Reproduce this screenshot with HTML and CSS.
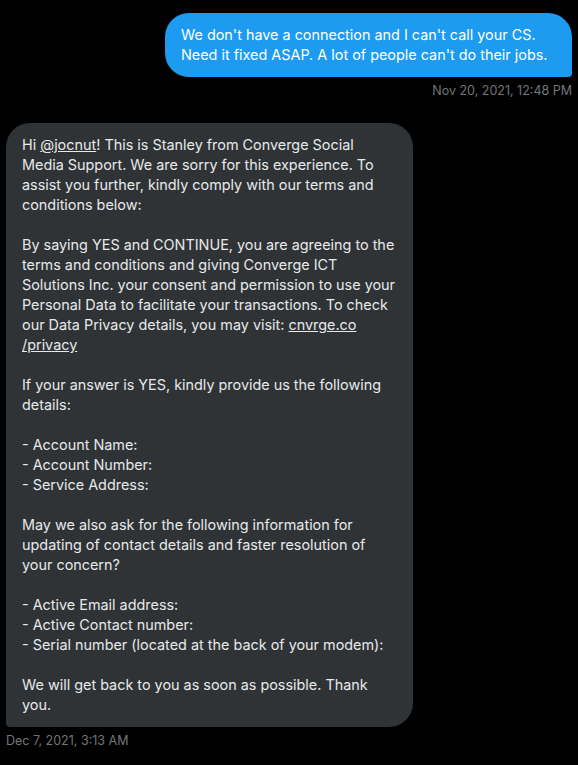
FILE: index.html
```html
<!DOCTYPE html>
<html lang="en">
<head>
    <meta charset="UTF-8">
    <meta name="viewport" content="width=device-width, initial-scale=1.0">
    <title>Messages</title>
    <link rel="stylesheet" href="styles.css">
</head>
<body>
    <div class="conversation">
        <div class="message sent">
            <div class="bubble">We don't have a connection and I can't call your CS. Need it fixed ASAP. A lot of people can't do their jobs.</div>
            <div class="time">Nov 20, 2021, 12:48 PM</div>
        </div>

        <div class="message received">
            <div class="bubble">Hi <a href="#">@jocnut</a>! This is Stanley from Converge Social Media Support. We are sorry for this experience. To assist you further, kindly comply with our terms and conditions below:

By saying YES and CONTINUE, you are agreeing to the terms and conditions and giving Converge ICT Solutions Inc. your consent and permission to use your Personal Data to facilitate your transactions. To check our Data Privacy details, you may visit: <a href="#">cnvrge.co<br>/privacy</a>

If your answer is YES, kindly provide us the following details:

- Account Name:
- Account Number:
- Service Address:

May we also ask for the following information for updating of contact details and faster resolution of your concern?

- Active Email address:
- Active Contact number:
- Serial number (located at the back of your modem):

We will get back to you as soon as possible. Thank you.</div>
            <div class="time">Dec 7, 2021, 3:13 AM</div>
        </div>
    </div>
</body>
</html>
```

FILE: styles.css
```css
body {
    margin: 0;
    background-color: #000;
    font-family: 'Inter', 'Liberation Sans', Arial, sans-serif;
    color: #e7e9ea;
}

.conversation {
    display: flex;
    flex-direction: column;
    padding: 13px 6px 0 6px;
}

.message {
    display: flex;
    flex-direction: column;
    max-width: 407px;
}

.sent {
    align-self: flex-end;
    align-items: flex-end;
    margin-bottom: 24px;
}

.received {
    align-self: flex-start;
    align-items: flex-start;
}

.bubble {
    box-sizing: border-box;
    width: 407px;
    padding: 12px 16px;
    font-size: 14.4px;
    line-height: 20px;
    white-space: pre-line;
    border-radius: 24px;
}

.sent .bubble {
    background-color: #1d9bf0;
    color: #fff;
    border-bottom-right-radius: 4px;
}

.received .bubble {
    background-color: #2f3336;
    border-bottom-left-radius: 4px;
}

.bubble a {
    color: inherit;
    text-decoration: underline;
}

.time {
    margin-top: 6px;
    font-size: 12.5px;
    line-height: 16px;
    color: #71767b;
}
```
